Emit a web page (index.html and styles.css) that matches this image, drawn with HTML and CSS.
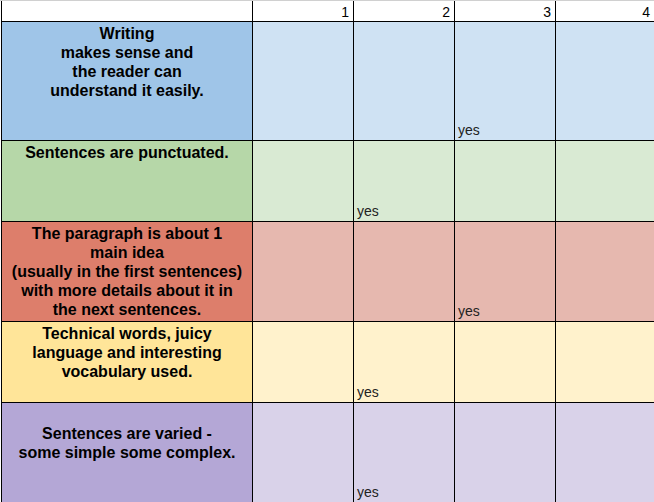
FILE: index.html
```html
<!DOCTYPE html>
<html>
<head>
<meta charset="utf-8">
<link rel="stylesheet" href="styles.css">
</head>
<body>
<div class="topline"></div>
<div class="sheet">
  <div class="hd"></div>
  <div class="hd num">1</div>
  <div class="hd num">2</div>
  <div class="hd num">3</div>
  <div class="hd num">4</div>

  <div class="lbl blue-l">Writing<br>makes sense and<br>the reader can<br>understand it easily.</div>
  <div class="cell blue"></div>
  <div class="cell blue"></div>
  <div class="cell blue">yes</div>
  <div class="cell blue"></div>

  <div class="lbl green-l">Sentences are punctuated.</div>
  <div class="cell green"></div>
  <div class="cell green">yes</div>
  <div class="cell green"></div>
  <div class="cell green"></div>

  <div class="lbl red-l">The paragraph is about 1<br>main idea<br>(usually in the first sentences)<br>with more details about it in<br>the next sentences.</div>
  <div class="cell red"></div>
  <div class="cell red"></div>
  <div class="cell red">yes</div>
  <div class="cell red"></div>

  <div class="lbl yellow-l">Technical words, juicy<br>language and interesting<br>vocabulary used.</div>
  <div class="cell yellow"></div>
  <div class="cell yellow">yes</div>
  <div class="cell yellow"></div>
  <div class="cell yellow"></div>

  <div class="lbl purple-l mid">Sentences are varied -<br>some simple some complex.</div>
  <div class="cell purple"></div>
  <div class="cell purple">yes</div>
  <div class="cell purple"></div>
  <div class="cell purple"></div>
</div>
</body>
</html>
```

FILE: styles.css
```css
html, body {
  margin: 0;
  padding: 0;
  overflow: hidden;
  background: #ffffff;
  font-family: "Liberation Sans", Arial, sans-serif;
}

.topline {
  height: 1px;
  background: #d0d0d0;
  width: 100%;
}

.sheet {
  display: grid;
  grid-template-columns: 250px 100px 100px 100px 98px;
  grid-template-rows: 20px 118px 80px 99px 80px 99px;
  gap: 1px;
  background: #000;
  margin-left: 1px;
  padding-left: 1px;
  width: max-content;
}

.hd {
  background: #fff;
  font-size: 14px;
  line-height: 16px;
  color: #000;
}

.num {
  text-align: right;
  padding: 3px 4px 0 0;
}

.num:last-child {
  padding-right: 2px;
}

.lbl {
  font-weight: bold;
  font-size: 16px;
  line-height: 19px;
  text-align: center;
  color: #000;
  padding-top: 2px;
}

.lbl.mid {
  padding-top: 21px;
}

.cell {
  font-size: 14px;
  line-height: 16px;
  color: #222;
  display: flex;
  align-items: flex-end;
  padding: 0 0 2px 3px;
}

.blue-l { background: #9fc5e8; }
.blue { background: #cfe2f3; }
.green-l { background: #b6d7a8; }
.green { background: #d9ead3; }
.red-l { background: #dd7e6b; }
.red { background: #e6b8af; }
.yellow-l { background: #ffe599; }
.yellow { background: #fff2cc; }
.purple-l { background: #b4a7d6; }
.purple { background: #d9d2e9; }
```
